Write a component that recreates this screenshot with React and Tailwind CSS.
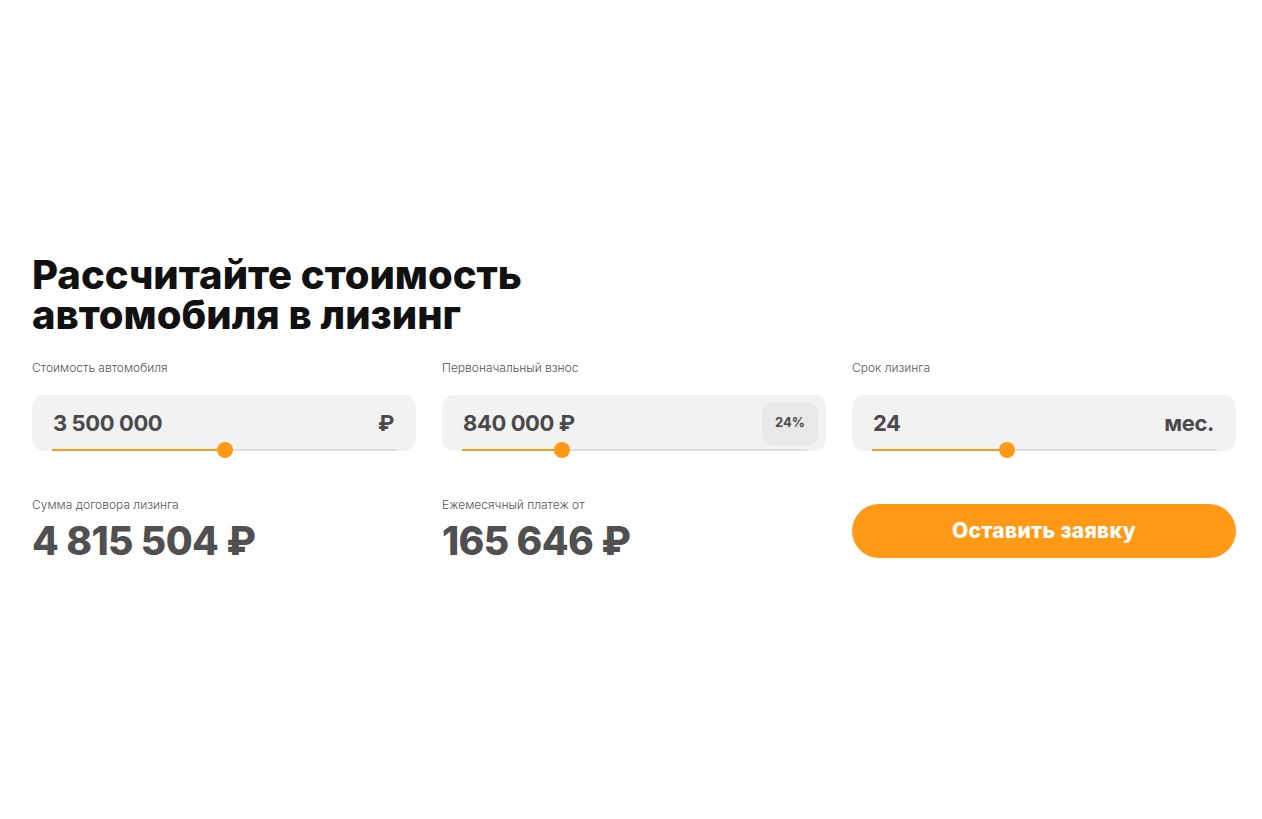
const font = { fontFamily: 'Inter, "Noto Sans", sans-serif' }

function SliderField({ label, value, suffix, badge, percent }) {
  return (
    <div className="flex flex-col">
      <div className="text-[12px] leading-[16px] font-light text-[#555]">{label}</div>
      <div className="relative mt-[19px] h-[56px] rounded-[12px] bg-[#f2f2f2] flex items-center pl-[21px] pr-[8px]">
        <div className="flex-1 text-[22px] font-bold text-[#4a4a4a] tracking-[-0.4px]">{value}</div>
        {suffix && (
          <div className="pr-[14px] text-[22px] font-bold text-[#4a4a4a] tracking-[-0.4px]">{suffix}</div>
        )}
        {badge && (
          <div className="h-[43px] w-[56px] rounded-[10px] bg-[#e8e8e8] flex items-center justify-center text-[13px] font-bold text-[#4a4a4a]">
            {badge}
          </div>
        )}
        <div className="absolute left-[20px] right-[19px] bottom-[0px] h-[2px] bg-[#dedede]">
          <div className="absolute left-0 top-0 h-[2px] bg-[#ff9916]" style={{ width: `${percent}%` }} />
          <div
            className="absolute top-[-7px] h-[16px] w-[16px] -ml-[8px] rounded-full bg-[#ff9916]"
            style={{ left: `${percent}%` }}
          />
        </div>
      </div>
    </div>
  )
}

function Result({ label, value }) {
  return (
    <div className="flex flex-col">
      <div className="text-[12px] leading-[16px] font-light text-[#555]">{label}</div>
      <div className="mt-[6px] text-[39px] leading-[44px] font-extrabold text-[#505050] tracking-[-0.6px]">{value}</div>
    </div>
  )
}

export default function App() {
  return (
    <div className="min-h-[819px] bg-white" style={font}>
      <div className="ml-[32px] w-[1204px] pt-[255px]">
        <h1 className="text-[40px] leading-[40px] font-extrabold text-[#111]">
          Рассчитайте стоимость<br />автомобиля в лизинг
        </h1>

        <div className="mt-[25px] grid grid-cols-3 gap-x-[26px]">
          <SliderField label="Стоимость автомобиля" value="3 500 000" suffix="₽" percent={50} />
          <SliderField label="Первоначальный взнос" value="840 000 ₽" badge="24%" percent={29} />
          <SliderField label="Срок лизинга" value="24" suffix="мес." percent={39} />
        </div>

        <div className="mt-[46px] grid grid-cols-3 gap-x-[26px] items-start">
          <Result label="Сумма договора лизинга" value="4 815 504 ₽" />
          <Result label="Ежемесячный платеж от" value="165 646 ₽" />
          <button
            type="button"
            className="mt-[7px] h-[54px] rounded-full bg-[#ff9916] text-white text-[21px] font-extrabold tracking-[0.3px]"
          >
            Оставить заявку
          </button>
        </div>
      </div>
    </div>
  )
}
